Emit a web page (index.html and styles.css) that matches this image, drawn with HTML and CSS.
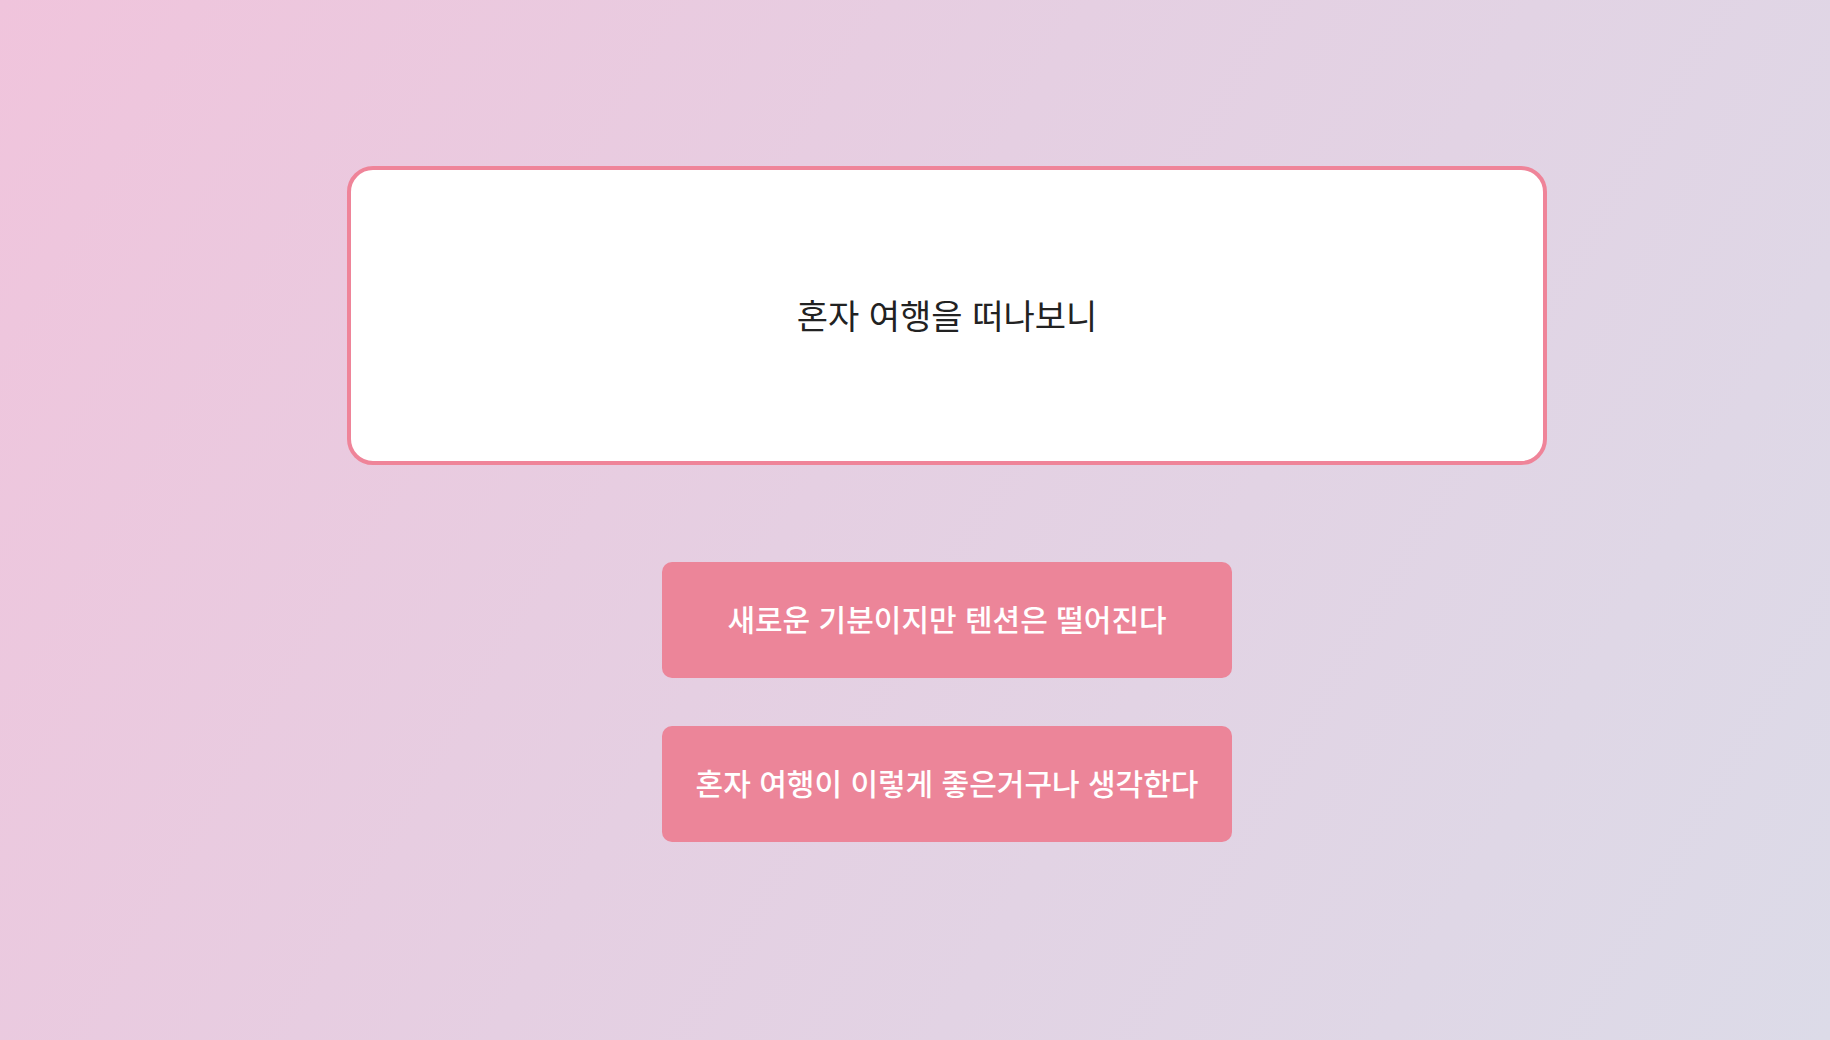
FILE: index.html
```html
<!DOCTYPE html>
<html lang="ko">
<head>
  <meta charset="UTF-8">
  <meta name="viewport" content="width=device-width, initial-scale=1.0">
  <title>혼자 여행</title>

  <link rel="stylesheet" href="styles.css">
</head>
<body>

  <div class="quiz">
    <div class="question">혼자 여행을 떠나보니</div>

    <div class="answers">
      <button class="answer">새로운 기분이지만 텐션은 떨어진다</button>
      <button class="answer">혼자 여행이 이렇게 좋은거구나 생각한다</button>
    </div>
  </div>

</body>
</html>
```

FILE: styles.css
```css
html {
  height: 100%;
}

body {
  margin: 0;
  min-height: 100%;
  padding: 166px 0 0 64px;
  box-sizing: border-box;
  background: linear-gradient(120deg, #f0c4dc 0%, #e5cfe2 45%, #dcdbe8 100%);
  font-family: "Noto Sans CJK KR", "Noto Sans", sans-serif;
}

.quiz {
  display: flex;
  flex-direction: column;
  align-items: center;
}

.question {
  width: 1200px;
  height: 299px;
  box-sizing: border-box;
  border: 4px solid #ef8499;
  border-radius: 26px;
  background: white;
  display: flex;
  justify-content: center;
  align-items: center;
  padding-bottom: 2px;
  font-size: 34px;
  color: #222;
}

.answers {
  display: flex;
  flex-direction: column;
  gap: 48px;
  margin-top: 97px;
}

.answer {
  width: 570px;
  height: 116px;
  padding: 0 0 4px;
  background-color: #ec8599;
  color: white;
  border: none;
  border-radius: 10px;
  font-family: inherit;
  font-size: 30px;
  font-weight: 500;
  cursor: pointer;
}
```
